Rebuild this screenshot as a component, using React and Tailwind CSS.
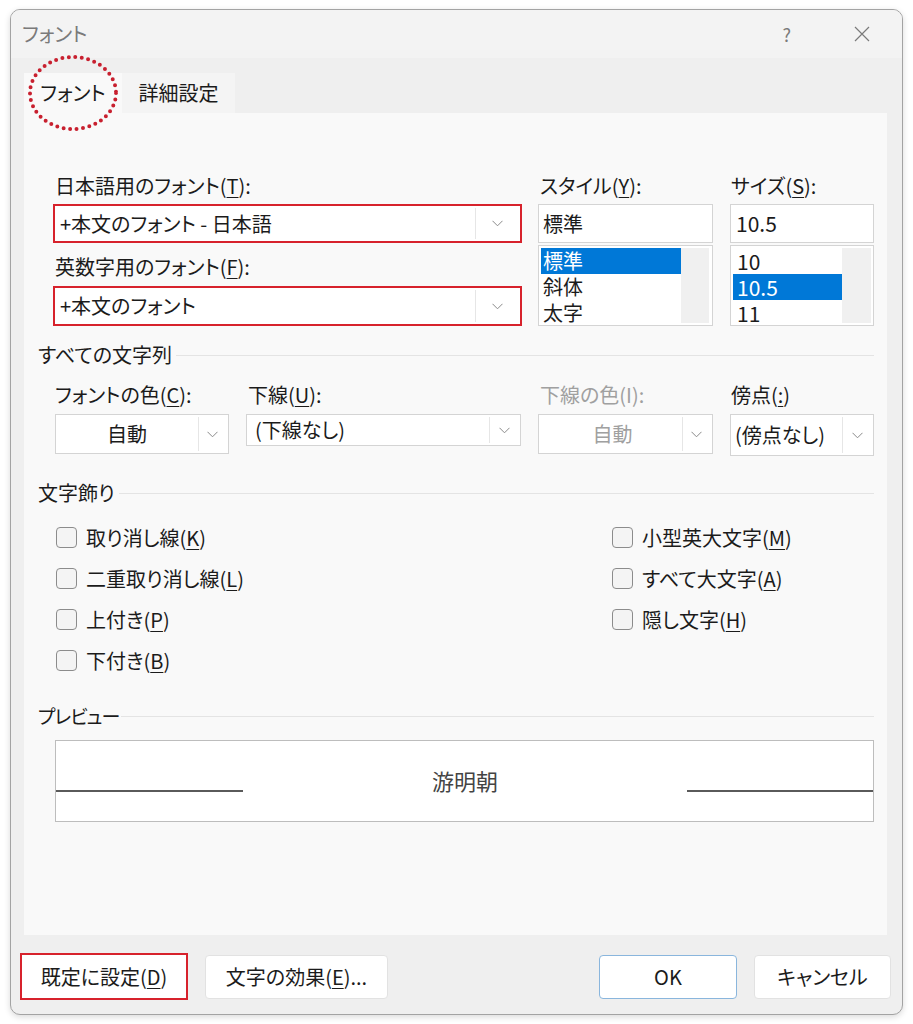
import React from 'react';

const Mn = ({ children }) => (
  <span className="underline decoration-1 underline-offset-[3px]">{children}</span>
);

const Chev = () => (
  <svg width="11" height="7" viewBox="0 0 11 7">
    <path d="M0.5 0.8l5 5 5-5" fill="none" stroke="#8a8a8a" strokeWidth="1" />
  </svg>
);

const ChevBox = ({ w }) => (
  <div className={`flex items-center justify-center self-stretch my-[2px] mr-[2px] border-l border-[#e6e6e6] ${w}`}>
    <Chev />
  </div>
);

const Check = ({ children }) => (
  <div className="flex items-center h-[41px]">
    <div className="w-[21px] h-[21px] rounded-[4px] border border-[#8c8c8c] bg-[#f4f4f4]"></div>
    <span className="ml-[9px] text-[20px] leading-[24px] text-[#1b1b1b]">{children}</span>
  </div>
);

const Section = ({ title }) => (
  <div className="flex items-center h-[24px] pl-[14px] pr-[13px]">
    <span className="text-[20px] leading-[24px] text-[#1b1b1b]">{title}</span>
    <div className="flex-1 h-px bg-[#e4e4e4] ml-[4px]"></div>
  </div>
);

const App = () => {
  return (
    <div className="min-h-screen bg-white pt-[9px] pl-[10px] font-['Noto_Sans_CJK_JP','Noto_Sans',sans-serif] [font-feature-settings:'palt']">
      <div className="relative w-[893px] h-[1006px] rounded-[10px] border border-[#a3a3a3] bg-[#efefef] shadow-[0_2px_6px_rgba(0,0,0,0.15)] overflow-hidden flex flex-col">
        {/* title bar */}
        <div className="h-[48px] bg-[#f3f3f3] flex items-center pl-[11px] pr-[32px]">
          <span className="text-[20px] text-[#7a7a7a] leading-none">フォント</span>
          <div className="flex-1"></div>
          <span className="text-[18px] text-[#7a7a7a] leading-none mr-[63px]">?</span>
          <svg width="16" height="16" viewBox="0 0 16 16">
            <path d="M1 1L15 15M15 1L1 15" stroke="#7a7a7a" strokeWidth="1.2" />
          </svg>
        </div>

        {/* tabs */}
        <div className="relative h-[55px] pt-[15px] pl-[13px] flex">
          <div className="w-[98px] h-[40px] bg-[#f9f9f9] flex items-center justify-center text-[20px] text-[#1b1b1b]">
            フォント
          </div>
          <div className="w-[113px] h-[40px] bg-[#f4f4f4] flex items-center justify-center text-[20px] text-[#1b1b1b]">
            詳細設定
          </div>
          <svg className="absolute left-[16px] top-[-4px]" width="92" height="78" viewBox="0 0 92 78">
            <ellipse cx="46" cy="39" rx="43" ry="36" fill="none" stroke="#c8202f" strokeWidth="4" strokeDasharray="0 6.5" strokeLinecap="round" />
          </svg>
        </div>

        {/* panel */}
        <div className="ml-[13px] w-[863px] h-[822px] bg-[#f9f9f9] text-[#1b1b1b]">
          <div className="flex pt-[61px] pl-[29px]">
            <div className="w-[469px]">
              <div className="h-[24px] pl-[2px] text-[20px] leading-[24px]">日本語用のフォント(<Mn>T</Mn>):</div>
              <div className="mt-[6px] h-[39px] border-2 border-[#d7222c] bg-white flex items-center">
                <span className="flex-1 pl-[5px] text-[20px]">+本文のフォント - 日本語</span>
                <ChevBox w="w-[43px]" />
              </div>
              <div className="mt-[12px] h-[24px] pl-[2px] text-[20px] leading-[24px]">英数字用のフォント(<Mn>F</Mn>):</div>
              <div className="mt-[7px] h-[40px] border-2 border-[#d7222c] bg-white flex items-center">
                <span className="flex-1 pl-[5px] text-[20px]">+本文のフォント</span>
                <ChevBox w="w-[43px]" />
              </div>
            </div>

            <div className="w-[175px] ml-[16px]">
              <div className="h-[24px] pl-[2px] text-[20px] leading-[24px]">スタイル(<Mn>Y</Mn>):</div>
              <div className="mt-[6px] h-[39px] border border-[#d4d4d4] bg-white flex items-center pl-[4px] text-[20px]">標準</div>
              <div className="mt-[2px] h-[81px] border border-[#d4d4d4] bg-white flex p-[2px] overflow-hidden">
                <div className="w-[140px] text-[20px] leading-[24px]">
                  <div className="h-[26px] pt-[1px] pl-[2px] bg-[#0078d7] text-white">標準</div>
                  <div className="h-[26px] pt-[1px] pl-[2px]">斜体</div>
                  <div className="h-[25px] pt-[1px] pl-[2px]">太字</div>
                </div>
                <div className="w-[28px] bg-[#f0f0f0]"></div>
              </div>
            </div>

            <div className="w-[144px] ml-[17px]">
              <div className="h-[24px] pl-[1px] text-[20px] leading-[24px]">サイズ(<Mn>S</Mn>):</div>
              <div className="mt-[6px] h-[39px] border border-[#d4d4d4] bg-white flex items-center pl-[5px] text-[21px]">10.5</div>
              <div className="mt-[2px] h-[81px] border border-[#d4d4d4] bg-white flex p-[2px] overflow-hidden">
                <div className="w-[109px] text-[21px] leading-[24px]">
                  <div className="h-[26px] pt-[1px] pl-[4px]">10</div>
                  <div className="h-[26px] pt-[1px] pl-[4px] bg-[#0078d7] text-white">10.5</div>
                  <div className="h-[25px] pt-[1px] pl-[4px]">11</div>
                </div>
                <div className="w-[29px] bg-[#f0f0f0]"></div>
              </div>
            </div>
          </div>

          <div className="mt-[17px]">
            <Section title="すべての文字列" />
          </div>

          <div className="flex pl-[31px] mt-[16px] text-[20px] leading-[24px]">
            <div className="w-[174px]">
              <div className="h-[24px]">フォントの色(<Mn>C</Mn>):</div>
              <div className="mt-[7px] h-[40px] border border-[#d4d4d4] bg-white flex items-center">
                <span className="flex-1 text-center">自動</span>
                <ChevBox w="w-[28px]" />
              </div>
            </div>
            <div className="w-[275px] ml-[17px]">
              <div className="h-[24px] pl-[2px]">下線(<Mn>U</Mn>):</div>
              <div className="mt-[7px] h-[32px] border border-[#d4d4d4] bg-white flex items-center">
                <span className="flex-1 pl-[8px]">(下線なし)</span>
                <ChevBox w="w-[29px]" />
              </div>
            </div>
            <div className="w-[175px] ml-[17px] text-[#a0a0a0]">
              <div className="h-[24px] pl-[2px]">下線の色(I):</div>
              <div className="mt-[7px] h-[40px] border border-[#d4d4d4] bg-white flex items-center">
                <span className="flex-1 text-center pl-[4px]">自動</span>
                <ChevBox w="w-[28px]" />
              </div>
            </div>
            <div className="w-[144px] ml-[17px]">
              <div className="h-[24px] pl-[1px]">傍点(<Mn>:</Mn>)</div>
              <div className="mt-[7px] h-[42px] border border-[#d4d4d4] bg-white flex items-center">
                <span className="flex-1 pl-[4px]">(傍点なし)</span>
                <ChevBox w="w-[29px]" />
              </div>
            </div>
          </div>

          <div className="mt-[25px]">
            <Section title="文字飾り" />
          </div>

          <div className="flex mt-[12px]">
            <div className="ml-[32px] w-[556px]">
              <Check>取り消し線(<Mn>K</Mn>)</Check>
              <Check>二重取り消し線(<Mn>L</Mn>)</Check>
              <Check>上付き(<Mn>P</Mn>)</Check>
              <Check>下付き(<Mn>B</Mn>)</Check>
            </div>
            <div>
              <Check>小型英大文字(<Mn>M</Mn>)</Check>
              <Check>すべて大文字(<Mn>A</Mn>)</Check>
              <Check>隠し文字(<Mn>H</Mn>)</Check>
            </div>
          </div>

          <div className="mt-[23px]">
            <div className="flex items-center h-[24px] pl-[14px] pr-[13px]">
              <span className="text-[19px] leading-[24px] tracking-[-1px] text-[#1b1b1b]">プレビュー</span>
              <div className="flex-1 h-px bg-[#e4e4e4] ml-[2px]"></div>
            </div>
          </div>

          <div className="ml-[31px] mt-[12px] w-[819px] h-[82px] border border-[#bdbdbd] bg-white flex">
            <div className="w-[187px] h-[1.5px] bg-[#5a5a5a] mt-[49px]"></div>
            <div className="flex-1 flex justify-center pt-[25px] text-[22px] leading-[28px] text-[#444444]">游明朝</div>
            <div className="w-[186px] h-[1.5px] bg-[#5a5a5a] mt-[49px]"></div>
          </div>
        </div>

        {/* buttons */}
        <div className="flex items-center pt-[18px] pl-[9px] text-[20px] text-[#1b1b1b]">
          <div className="w-[168px] h-[47px] border-2 border-[#d7222c] bg-white flex items-center justify-center">
            既定に設定(<Mn>D</Mn>)
          </div>
          <div className="ml-[17px] w-[183px] h-[44px] border border-[#e2e2e2] rounded-[4px] bg-white flex items-center justify-center">
            文字の効果(<Mn>E</Mn>)...
          </div>
          <div className="flex-1"></div>
          <div className="w-[138px] h-[44px] border border-[#8ab6dd] rounded-[4px] bg-white flex items-center justify-center">
            OK
          </div>
          <div className="ml-[17px] mr-[11px] w-[137px] h-[44px] border border-[#e2e2e2] rounded-[4px] bg-white flex items-center justify-center">
            キャンセル
          </div>
        </div>
      </div>
    </div>
  );
};

export default App;
